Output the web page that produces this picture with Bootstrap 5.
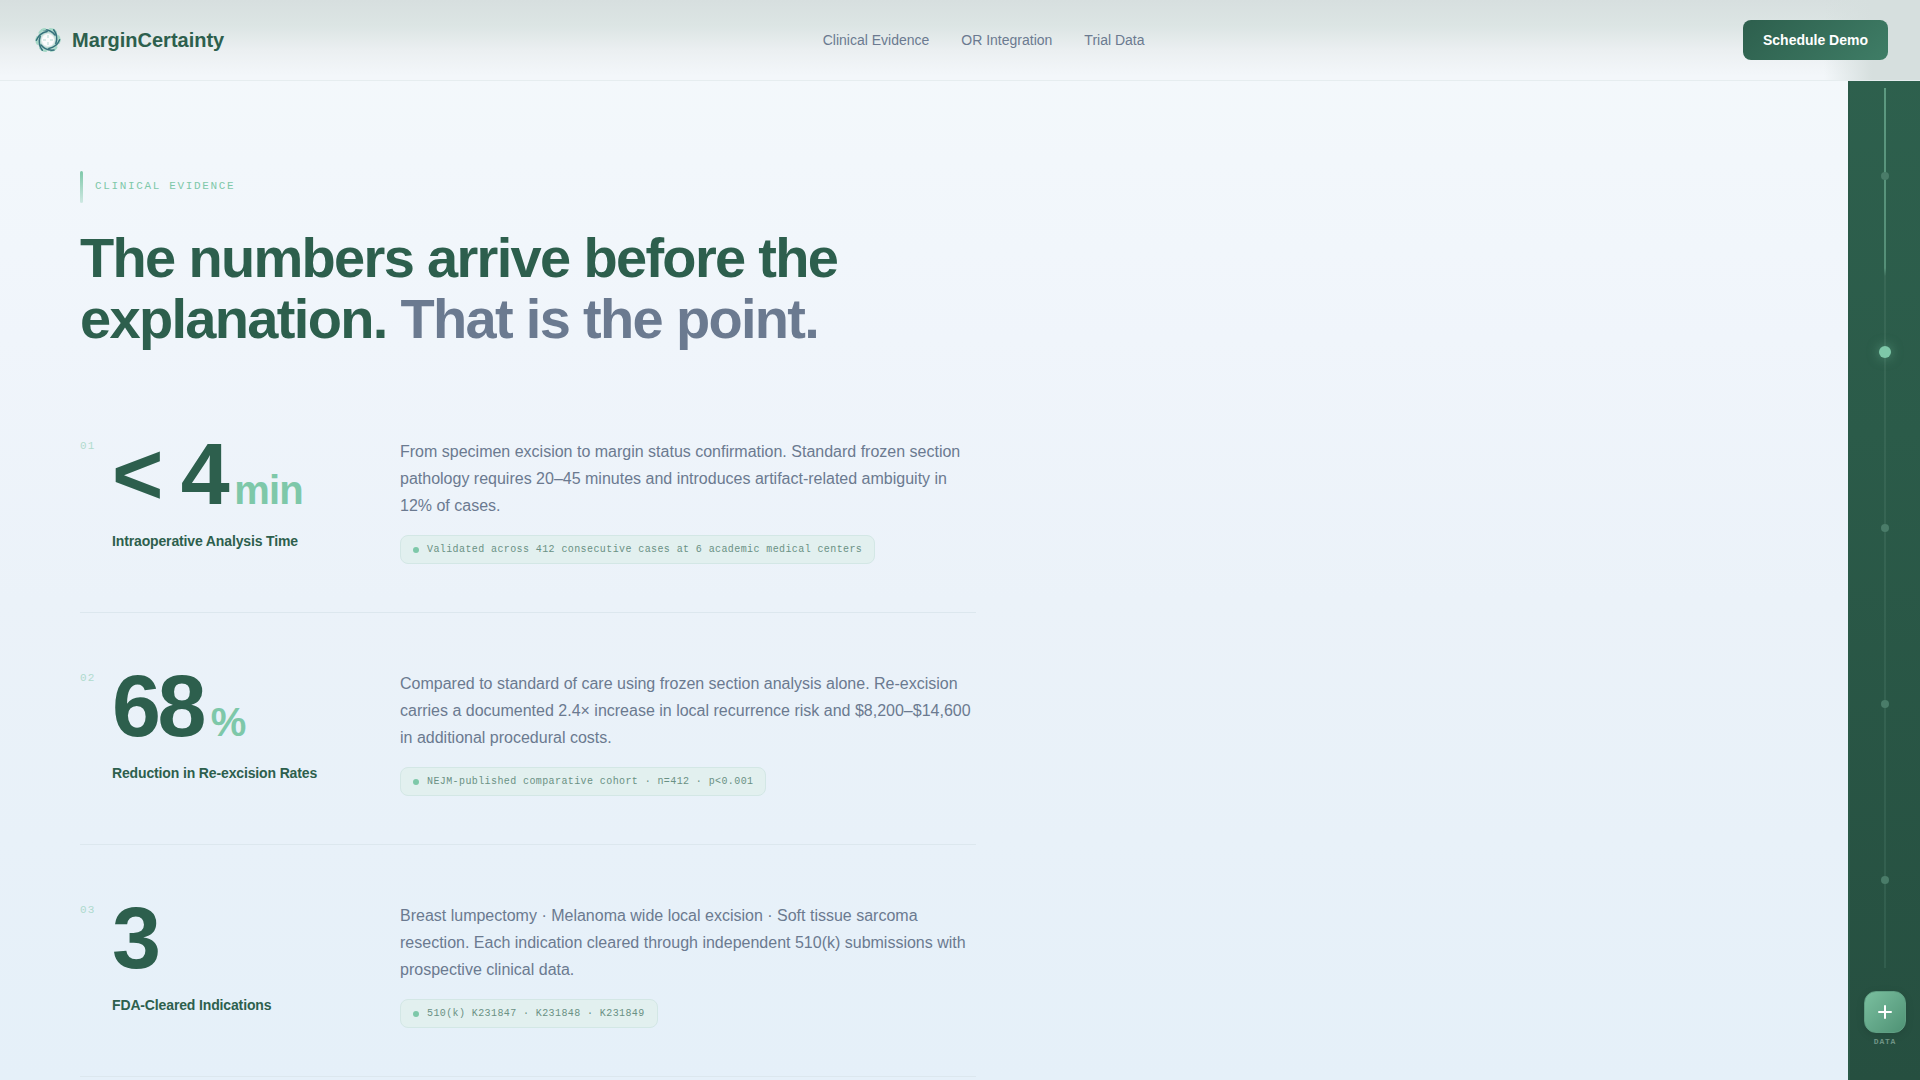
<!DOCTYPE html>
<html lang="en">
<head>
<meta charset="utf-8">
<meta name="viewport" content="width=device-width, initial-scale=1">
<title>MarginCertainty</title>
<link href="https://cdn.jsdelivr.net/npm/bootstrap@5.3.0/dist/css/bootstrap.min.css" rel="stylesheet">
<style>
:root{--pine:#2d5f4d;--mint:#7ec8a9;--slate:#6b7a90;--rail:72px}
body{font-family:"Liberation Sans",Arial,sans-serif;color:var(--slate);background:linear-gradient(180deg,#f5f9fb 0,#f2f7fb 160px,#f0f5fb 340px,#ebf2f9 600px,#e5f0f9 1080px) #e5f0f9;overflow:hidden;min-height:100vh}
.mono{font-family:"Liberation Mono","Courier New",monospace}
.site-head{height:81px;border-bottom:1px solid #e6edef;z-index:30;background:linear-gradient(90deg,rgba(214,223,222,0) calc(100% - 96px),#d6dfde calc(100% - 48px)),linear-gradient(180deg,#d7dfdf 0,#dce5e4 26px,#ebeff1 50px,#f3f7fa 76px)}
.brand-name{font-size:20px;line-height:24px;color:var(--pine)}
.site-head .nav-link{font-size:14px;line-height:20px;color:var(--slate)}
.btn-demo{height:40px;padding:0 20px;font-size:14px;font-weight:700;border:0;border-radius:8px;color:#fff;background:linear-gradient(135deg,#2d5f4d,#3f7d66)}
.btn-demo:hover{color:#fff}
.evidence{padding:90px 80px 0;margin-right:var(--rail)}
.eyebrow-bar{width:3px;height:32px;border-radius:2px;background:linear-gradient(180deg,#7ec8a9,rgba(126,200,169,.3))}
.eyebrow{padding-bottom:2px;font-size:11px;line-height:13px;letter-spacing:.15em;color:var(--mint)}
.headline{max-width:896px;font-size:56px;line-height:61px;letter-spacing:-.03em;font-weight:700;color:var(--pine)}
.headline span{color:var(--slate)}
.stats{max-width:896px}
.stat{padding:49px 0 48px;border-bottom:1px solid #dce7ee}
.stat-left{width:320px}
.stat-idx{width:32px;padding-top:9px;font-size:11px;line-height:14px;letter-spacing:.1em;color:var(--mint);opacity:.55}
.stat-num{font-size:88px;line-height:88px;font-weight:700;letter-spacing:-.04em;color:var(--pine)}
.stat-unit{font-size:40px;line-height:40px;letter-spacing:-.02em;color:var(--mint)}
.stat-label{margin-top:14px;font-size:14px;line-height:18px;letter-spacing:-.01em;font-weight:700;color:var(--pine)}
.stat-text{font-size:16px;line-height:27px}
.proof{height:29px;padding:0 12px;font-size:10px;letter-spacing:.04em;color:#6a9184;border:1px solid #d3e7e5;border-radius:8px;background:#e2f0ef}
.proof i{width:6px;height:6px;border-radius:50%;background:var(--mint)}
.rail{top:0;width:var(--rail);padding-top:88px;z-index:10;border-left:2px solid #2b5a49;background:linear-gradient(180deg,#2e614e,#2b5b49 40%,#264f40)}
.track{width:12px;height:calc(100vh - 200px);background:linear-gradient(180deg,rgba(126,200,169,.5),rgba(126,200,169,.4) 180px,transparent 188px) center/2px 100% no-repeat,linear-gradient(#3a6b58,#325e4e) center/2px 100% no-repeat}
.track a{flex:1 1 0}
.track a::before{content:"";width:8px;height:8px;border-radius:50%;background:#4a7c69}
.track a.active::before{width:12px;height:12px;background:var(--mint);box-shadow:0 0 12px rgba(126,200,169,.5)}
.btn-data{width:42px;height:42px;margin-top:23px;border-radius:12px;border:1px solid #5f9f83;background:linear-gradient(135deg,#7abf9f,#4f9275);box-shadow:0 2px 8px rgba(0,0,0,.1)}
.data-cap{font-size:8px;line-height:10px;letter-spacing:.1em;font-weight:700;color:#6f9485}
</style>
<script src="https://cdn.jsdelivr.net/npm/bootstrap@5.3.0/dist/js/bootstrap.bundle.min.js"></script>
</head>
<body>
<header class="site-head position-relative d-flex align-items-center justify-content-between px-4">
  <a href="#" class="d-flex align-items-center gap-2 ms-2 text-decoration-none">
    <svg width="32" height="32" viewBox="0 0 32 32" fill="none" aria-hidden="true">
      <circle cx="16" cy="16" r="9" stroke="#a8d5c8" stroke-opacity=".7" stroke-width="4"/>
      <g id="blade">
        <path d="M10 6Q18 5 23 11" stroke="#36717c" stroke-width="1.5" stroke-linecap="round"/>
        <path d="M18 5q4 0 6 3" stroke="#a5d8c6" stroke-width="2" stroke-linecap="round"/>
      </g>
      <use href="#blade" transform="rotate(60 16 16)"/><use href="#blade" transform="rotate(120 16 16)"/>
      <use href="#blade" transform="rotate(180 16 16)"/><use href="#blade" transform="rotate(240 16 16)"/>
      <use href="#blade" transform="rotate(300 16 16)"/>
      <circle cx="16" cy="16" r="6" fill="#fff" fill-opacity=".85"/>
      <path d="M16 11v3M16 18v3M11 16h3M18 16h3" stroke="#b5d9d2"/>
    </svg>
    <span class="brand-name fw-bold">MarginCertainty</span>
  </a>
  <nav class="d-flex gap-4">
    <a class="nav-link me-2" href="#evidence">Clinical Evidence</a>
    <a class="nav-link me-2" href="#integration">OR Integration</a>
    <a class="nav-link" href="#trials">Trial Data</a>
  </nav>
  <button type="button" class="btn btn-demo me-2">Schedule Demo</button>
</header>

<main class="evidence" id="evidence">
  <div class="d-flex align-items-center mb-4">
    <span class="eyebrow-bar me-2"></span>
    <span class="eyebrow mono ms-1">CLINICAL EVIDENCE</span>
  </div>
  <h1 class="headline mb-0">The numbers arrive before the explanation. <span>That is the point.</span></h1>

  <div class="stats mt-4 pt-2">
    <section class="stat d-flex">
      <div class="stat-left d-flex flex-shrink-0">
        <span class="stat-idx mono flex-shrink-0">01</span>
        <div>
          <div class="stat-num text-nowrap">&lt; 4<span class="stat-unit ms-2">min</span></div>
          <div class="stat-label">Intraoperative Analysis Time</div>
        </div>
      </div>
      <div class="pt-2">
        <p class="stat-text mb-3">From specimen excision to margin status confirmation. Standard frozen section pathology requires 20–45 minutes and introduces artifact-related ambiguity in 12% of cases.</p>
        <div class="proof mono d-inline-flex align-items-center gap-2 align-top"><i></i><span>Validated across 412 consecutive cases at 6 academic medical centers</span></div>
      </div>
    </section>
    <section class="stat d-flex">
      <div class="stat-left d-flex flex-shrink-0">
        <span class="stat-idx mono flex-shrink-0">02</span>
        <div>
          <div class="stat-num text-nowrap">68<span class="stat-unit ms-2">%</span></div>
          <div class="stat-label">Reduction in Re-excision Rates</div>
        </div>
      </div>
      <div class="pt-2">
        <p class="stat-text mb-3">Compared to standard of care using frozen section analysis alone. Re-excision carries a documented 2.4× increase in local recurrence risk and $8,200–$14,600 in additional procedural costs.</p>
        <div class="proof mono d-inline-flex align-items-center gap-2 align-top"><i></i><span>NEJM-published comparative cohort · n=412 · p&lt;0.001</span></div>
      </div>
    </section>
    <section class="stat d-flex">
      <div class="stat-left d-flex flex-shrink-0">
        <span class="stat-idx mono flex-shrink-0">03</span>
        <div>
          <div class="stat-num text-nowrap">3</div>
          <div class="stat-label">FDA-Cleared Indications</div>
        </div>
      </div>
      <div class="pt-2">
        <p class="stat-text mb-3">Breast lumpectomy · Melanoma wide local excision · Soft tissue sarcoma resection. Each indication cleared through independent 510(k) submissions with prospective clinical data.</p>
        <div class="proof mono d-inline-flex align-items-center gap-2 align-top"><i></i><span>510(k) K231847 · K231848 · K231849</span></div>
      </div>
    </section>
  </div>
</main>

<aside class="rail position-fixed end-0 bottom-0 d-flex flex-column align-items-center">
  <nav class="track d-flex flex-column align-items-stretch" aria-label="Sections">
    <a class="d-flex align-items-center justify-content-center" href="#s1" aria-label="Section 1"></a>
    <a class="active d-flex align-items-center justify-content-center" href="#s2" aria-label="Section 2"></a>
    <a class="d-flex align-items-center justify-content-center" href="#s3" aria-label="Section 3"></a>
    <a class="d-flex align-items-center justify-content-center" href="#s4" aria-label="Section 4"></a>
    <a class="d-flex align-items-center justify-content-center" href="#s5" aria-label="Section 5"></a>
  </nav>
  <button type="button" class="btn-data d-flex align-items-center justify-content-center p-0" aria-label="Show data">
    <svg width="16" height="16" viewBox="0 0 16 16" stroke="#fff" stroke-width="2" stroke-linecap="round" aria-hidden="true"><path d="M8 2v12M2 8h12"/></svg>
  </button>
  <span class="data-cap mono mt-1">DATA</span>
</aside>
</body>
</html>
